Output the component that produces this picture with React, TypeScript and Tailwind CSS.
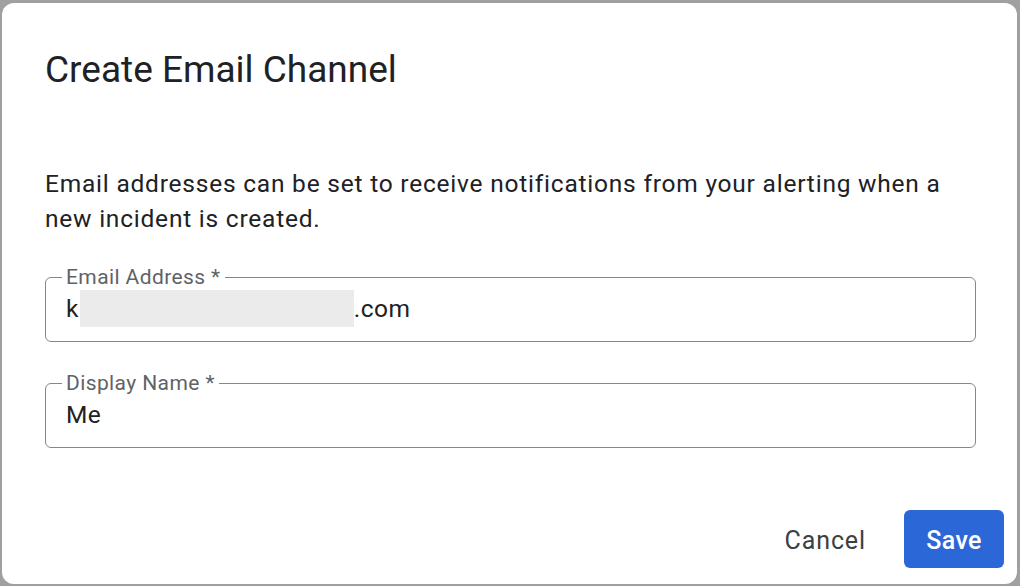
import React from "react";

const font = "[font-family:Roboto,'Liberation_Sans',sans-serif]";

function Field({ label, children }: { label: string; children: React.ReactNode }) {
  return (
    <fieldset className="m-0 h-[77px] min-w-0 rounded-[6px] border border-[#84878c] pl-[16px] pr-[12px] pt-0 pb-0">
      <legend className={`px-[4px] text-[21px] leading-[24px] tracking-[0.4px] text-[#5f6368] ${font}`}>
        {label}
      </legend>
      <div className={`flex h-[52px] items-start pl-[4px] pt-[1px] text-[24.5px] leading-[32px] tracking-[0.44px] text-[#202124] ${font}`}>
        {children}
      </div>
    </fieldset>
  );
}

export default function App() {
  return (
    <div className="h-[586px] w-[1020px] bg-[#a0a0a0] pb-[2px] pl-[2px] pr-[3px] pt-[3px]">
      <div className="flex h-full w-full flex-col rounded-[12px] bg-white pl-[43px] pr-[41px]">
        <h1 className={`mt-[45px] text-[37px] leading-[44px] text-[#202124] ${font}`}>
          Create Email Channel
        </h1>
        <p className={`mt-[74px] text-[24.5px] leading-[35px] tracking-[0.78px] text-[#202124] ${font}`}>
          Email addresses can be set to receive notifications from your alerting when a new incident is created.
        </p>
        <div className="mt-[29px] flex flex-col gap-[29px]">
          <Field label="Email Address *">
            <div className="flex h-[37px] items-center">
              <span>k</span>
              <span className="ml-[1px] inline-block h-[37px] w-[274px] bg-[#ebebeb]" />
              <span>.com</span>
            </div>
          </Field>
          <Field label="Display Name *">
            <div className="flex h-[37px] items-center">
              <span>Me</span>
            </div>
          </Field>
        </div>
        <div className="-mr-[28px] mb-[16px] mt-auto flex items-center justify-end gap-[38px]">
          <button className={`pt-[3px] text-[25px] font-normal tracking-[0.9px] text-[#3c4043] ${font}`}>Cancel</button>
          <button className={`h-[58px] w-[100px] rounded-[6px] bg-[#2c67d8] pt-[3px] text-[25px] font-medium tracking-[0.3px] text-white ${font}`}>
            Save
          </button>
        </div>
      </div>
    </div>
  );
}
